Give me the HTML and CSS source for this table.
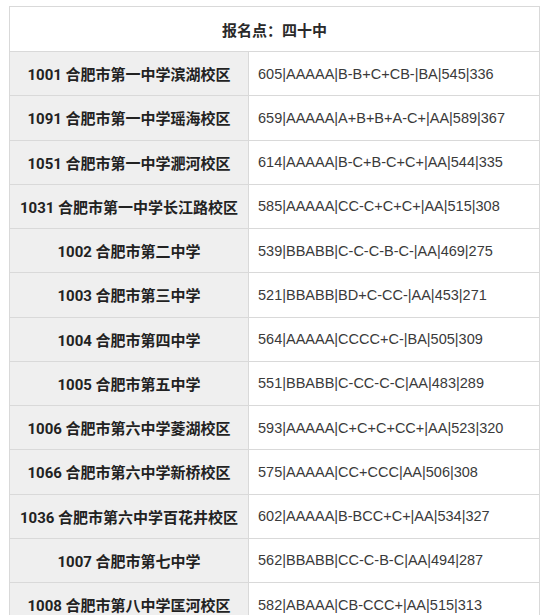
FILE: index.html
```html
<!DOCTYPE html>
<html lang="zh-CN">
<head>
<meta charset="utf-8">
<title>报名点：四十中</title>
<link rel="stylesheet" href="styles.css">
</head>
<body>
<table class="score-table">
  <colgroup>
    <col class="col-school">
    <col class="col-data">
  </colgroup>
  <thead>
    <tr><th class="title" colspan="2">报名点：四十中</th></tr>
  </thead>
  <tbody>
    <tr><td class="school">1001 合肥市第一中学滨湖校区</td><td class="data">605|AAAAA|B-B+C+CB-|BA|545|336</td></tr>
    <tr><td class="school">1091 合肥市第一中学瑶海校区</td><td class="data">659|AAAAA|A+B+B+A-C+|AA|589|367</td></tr>
    <tr><td class="school">1051 合肥市第一中学淝河校区</td><td class="data">614|AAAAA|B-C+B-C+C+|AA|544|335</td></tr>
    <tr><td class="school">1031 合肥市第一中学长江路校区</td><td class="data">585|AAAAA|CC-C+C+C+|AA|515|308</td></tr>
    <tr><td class="school">1002 合肥市第二中学</td><td class="data">539|BBABB|C-C-C-B-C-|AA|469|275</td></tr>
    <tr><td class="school">1003 合肥市第三中学</td><td class="data">521|BBABB|BD+C-CC-|AA|453|271</td></tr>
    <tr><td class="school">1004 合肥市第四中学</td><td class="data">564|AAAAA|CCCC+C-|BA|505|309</td></tr>
    <tr><td class="school">1005 合肥市第五中学</td><td class="data">551|BBABB|C-CC-C-C|AA|483|289</td></tr>
    <tr><td class="school">1006 合肥市第六中学菱湖校区</td><td class="data">593|AAAAA|C+C+C+CC+|AA|523|320</td></tr>
    <tr><td class="school">1066 合肥市第六中学新桥校区</td><td class="data">575|AAAAA|CC+CCC|AA|506|308</td></tr>
    <tr><td class="school">1036 合肥市第六中学百花井校区</td><td class="data">602|AAAAA|B-BCC+C+|AA|534|327</td></tr>
    <tr><td class="school">1007 合肥市第七中学</td><td class="data">562|BBABB|CC-C-B-C|AA|494|287</td></tr>
    <tr><td class="school">1008 合肥市第八中学匡河校区</td><td class="data">582|ABAAA|CB-CCC+|AA|515|313</td></tr>
  </tbody>
</table>
</body>
</html>
```

FILE: styles.css
```css
html, body {
  margin: 0;
  padding: 0;
  background: #ffffff;
}

body {
  padding: 6px 0 0 9px;
  font-family: Roboto, "Noto Sans CJK SC", sans-serif;
  color: #2b2b2b;
}

.score-table {
  width: 530px;
  border-collapse: collapse;
  table-layout: fixed;
  font-size: 15px;
}

.col-school {
  width: 239px;
}

.col-data {
  width: 291px;
}

.score-table th,
.score-table td {
  border: 1px solid #d9d9d9;
  padding: 0;
  white-space: nowrap;
}

.title {
  height: 44px;
  font-weight: 700;
  text-align: center;
  background: #ffffff;
  color: #2a2a2a;
}

.score-table tbody tr {
  height: 44.25px;
}

.school {
  background: #efefef;
  font-weight: 700;
  text-align: center;
  color: #222222;
}

.score-table td.data {
  background: #ffffff;
  padding-left: 9px;
  color: #3a3a3a;
  font-family: "Liberation Sans", Arial, sans-serif;
  font-size: 14.5px;
}
```
